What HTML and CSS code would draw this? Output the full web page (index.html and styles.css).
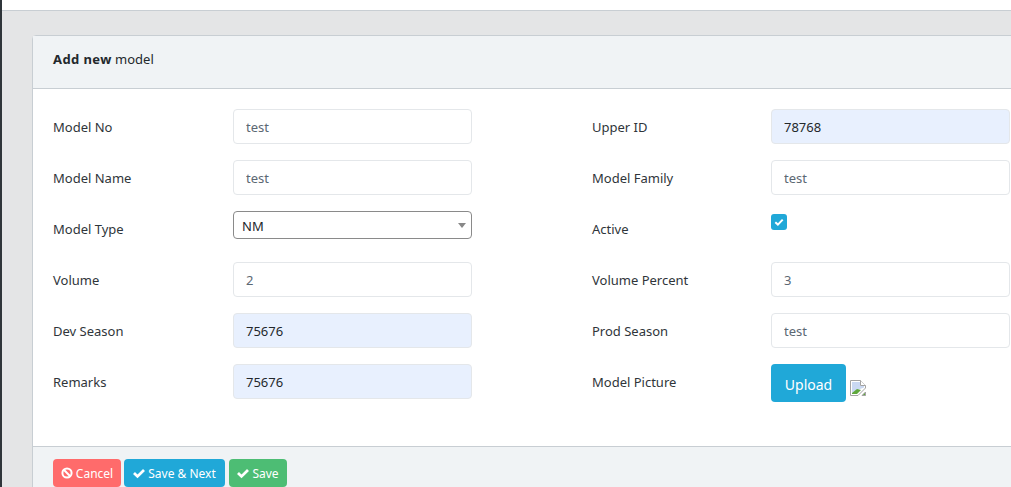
FILE: index.html
```html
<!DOCTYPE html>
<html>
<head>
    <meta http-equiv="Content-Type" content="text/html; charset=utf-8" />
    <title>Add new model</title>
    <link rel="stylesheet" href="styles.css">
</head>
<body>
<div class="sidebar"></div>
<div class="main">
    <div class="topbar"></div>
    <div class="content">
        <div class="card">
            <div class="card-header"><strong>Add new</strong> model</div>
            <div class="card-body">
                <div class="form-grid">
                    <label class="form-label">Model No</label>
                    <input class="form-control" type="text" value="test">
                    <span></span>
                    <label class="form-label">Upper ID</label>
                    <input class="form-control filled" type="text" value="78768">

                    <label class="form-label">Model Name</label>
                    <input class="form-control" type="text" value="test">
                    <span></span>
                    <label class="form-label">Model Family</label>
                    <input class="form-control" type="text" value="test">

                    <label class="form-label">Model Type</label>
                    <div class="select-wrap">
                        <select class="form-select"><option>NM</option></select>
                    </div>
                    <span></span>
                    <label class="form-label">Active</label>
                    <div class="check-wrap">
                        <span class="check-box">
                            <svg width="10" height="10" viewBox="0 0 10 10"><path d="M1.3 5.2 L3.9 7.6 L8.7 2.6" fill="none" stroke="#fff" stroke-width="2"/></svg>
                        </span>
                    </div>

                    <label class="form-label">Volume</label>
                    <input class="form-control" type="text" value="2">
                    <span></span>
                    <label class="form-label">Volume Percent</label>
                    <input class="form-control" type="text" value="3">

                    <label class="form-label">Dev Season</label>
                    <input class="form-control filled" type="text" value="75676">
                    <span></span>
                    <label class="form-label">Prod Season</label>
                    <input class="form-control" type="text" value="test">

                    <label class="form-label">Remarks</label>
                    <input class="form-control filled" type="text" value="75676">
                    <span></span>
                    <label class="form-label">Model Picture</label>
                    <div class="upload-row">
                        <button class="btn-upload" type="button">Upload</button>
                        <svg class="broken-img" width="16" height="16" viewBox="0 0 16 16">
                            <path d="M0.5 0.5 H10.5 L15.5 5.5 V8 L8 15.5 H0.5 Z" fill="#fff" stroke="#a3a3a3"/>
                            <path d="M2 2 H10 V6 H14 V7.5 L10 9 L2 13 Z" fill="#c9d8f2"/>
                            <path d="M2 14 V13 L7 9 L11 10 L7 14 Z" fill="#5fa83c"/>
                            <path d="M10.5 0.5 V5.5 H15.5" fill="#fff" stroke="#a3a3a3"/>
                            <path d="M12 15.5 L15.5 12 V15.5 Z" fill="#5fa83c" stroke="#a3a3a3"/>
                        </svg>
                    </div>
                </div>
            </div>
            <div class="card-footer">
                <button class="btn btn-danger" type="button">
                    <svg width="12" height="12" viewBox="0 0 12 12"><circle cx="6" cy="6" r="4.6" fill="none" stroke="#fff" stroke-width="2"/><path d="M2.8 2.8 L9.2 9.2" stroke="#fff" stroke-width="2"/></svg>
                    Cancel
                </button>
                <button class="btn btn-info" type="button">
                    <svg width="12" height="12" viewBox="0 0 12 12"><path d="M1 6 L4.5 9.4 L11 3" fill="none" stroke="#fff" stroke-width="2.8"/></svg>
                    Save &amp; Next
                </button>
                <button class="btn btn-success" type="button">
                    <svg width="12" height="12" viewBox="0 0 12 12"><path d="M1 6 L4.5 9.4 L11 3" fill="none" stroke="#fff" stroke-width="2.8"/></svg>
                    Save
                </button>
            </div>
        </div>
    </div>
</div>
</body>
</html>
```

FILE: styles.css
```css
*{ margin: 0; padding: 0; box-sizing: border-box;}
html, body{ height: 100%; overflow: hidden;}
body{ display: flex; background: #e4e5e6; font-family: "Noto Sans", "Open Sans", sans-serif; font-size: 13px; color: #23282c;}

.sidebar{ width: 2px; flex: none; background: #2f353a;}
.main{ flex: 1; min-width: 0;}
.topbar{ height: 11px; background: #fff; border-bottom: 1px solid #c8ced3;}
.content{ padding: 24px 0 0 30px;}

.card{ width: 1020px; background: #fff; border: 1px solid #c8ced3; border-radius: 4px 0 0 4px;}
.card-header{ height: 53px; padding: 0 20px; line-height: 47px; background: #f0f3f5; border-bottom: 1px solid #c8ced3;}
.card-header strong{ letter-spacing: .4px;}
.card-body{ height: 357px; padding: 20px;}
.card-footer{ padding: 12px 20px; background: #f0f3f5; border-top: 1px solid #c8ced3; display: flex; gap: 3px;}

.form-grid{ display: grid; grid-template-columns: 180px 239px 120px 179px 239px; grid-auto-rows: 35px; row-gap: 16px; align-items: center;}
.form-label{ color: #2f353a;}
.form-control{ width: 100%; height: 35px; padding: 0 12px; border: 1px solid #e4e7ea; border-radius: 4px; font: inherit; color: #5c6873; background: #fff; outline: none;}
.form-control.filled{ background: #e8f0fe; color: #23282c;}

.select-wrap{ position: relative; height: 28px; align-self: start;}
.select-wrap::after{ content: ""; position: absolute; right: 6px; top: 12px; border: 4px solid transparent; border-top: 5px solid #888; border-bottom: 0;}
.form-select{ width: 100%; height: 28px; padding: 1px 0 0 8px; border: 1px solid #8a8a8a; border-radius: 4px; font: inherit; color: #23282c; background: #fff; appearance: none; outline: none;}

.check-wrap{ align-self: start; margin-top: 3px; height: 16px;}
.check-box{ display: flex; align-items: center; justify-content: center; width: 16px; height: 16px; border-radius: 3px; background: #20a8d8;}

.upload-row{ display: flex; align-items: flex-end; gap: 4px; height: 38px; margin-top: 3px;}
.btn-upload{ width: 75px; height: 38px; padding-top: 2px; border: 0; border-radius: 4px; background: #20a8d8; color: #fff; font: inherit; font-size: 14px;}
.broken-img{ margin-bottom: 6px;}

.btn{ display: flex; align-items: center; justify-content: center; gap: 3px; height: 28px; border: 0; border-radius: 4px; color: #fff; font: inherit; font-size: 12px;}
.btn-danger{ width: 68px; background: #ff6b6b;}
.btn-info{ width: 101px; margin-right: 1px; background: #20a8d8;}
.btn-success{ width: 58px; background: #4dbd74;}
```
